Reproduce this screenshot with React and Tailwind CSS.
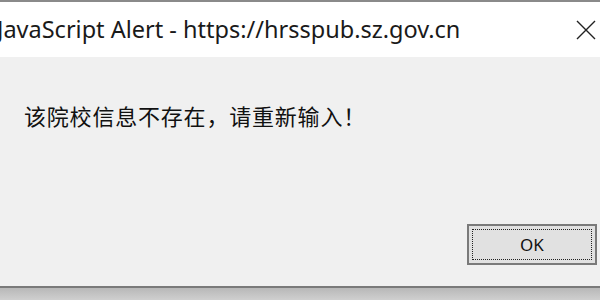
export default function App() {
  return (
    <div className="w-[600px] h-[300px] overflow-hidden flex flex-col bg-[#f0f0f0]" style={{ fontFamily: '"Noto Sans", "Noto Sans CJK SC", sans-serif' }}>
      <div className="h-[2px] bg-[#8a8a8a] shrink-0" />
      {/* title bar */}
      <div className="h-[55px] shrink-0 bg-white flex items-center justify-between">
        <div className="ml-[-3px] text-[23.5px] text-[#1a1a1a] leading-none whitespace-nowrap">JavaScript Alert - https://hrsspub.sz.gov.cn</div>
        <svg width="20" height="20" viewBox="0 0 20 20" className="mr-[4px]">
          <path d="M1 1 L19 19 M19 1 L1 19" stroke="#222" strokeWidth="1.4" fill="none" />
        </svg>
      </div>
      {/* body */}
      <div className="flex-1 flex flex-col">
        <div className="pl-[24px] pt-[47px] text-[22px] tracking-[0.8px] leading-none text-[#111]" style={{ fontFamily: '"Noto Sans CJK SC", sans-serif' }}>
          该院校信息不存在，请重新输入！
        </div>
        <div className="flex justify-end mt-auto mb-[21px] pr-[3px]">
          <button className="w-[130px] h-[41px] border-2 border-[#7a7a7a] bg-[#e1e1e1] p-[3px]">
            <div className="w-full h-full border border-dotted border-[#222] flex items-center justify-center text-[17px] text-[#111]">
              OK
            </div>
          </button>
        </div>
      </div>
      <div className="h-[2px] bg-[#7a7a7a] shrink-0" />
      <div className="h-[12px] shrink-0 bg-gradient-to-b from-[#b8b8b8] to-[#cfcfcf]" />
    </div>
  );
}
